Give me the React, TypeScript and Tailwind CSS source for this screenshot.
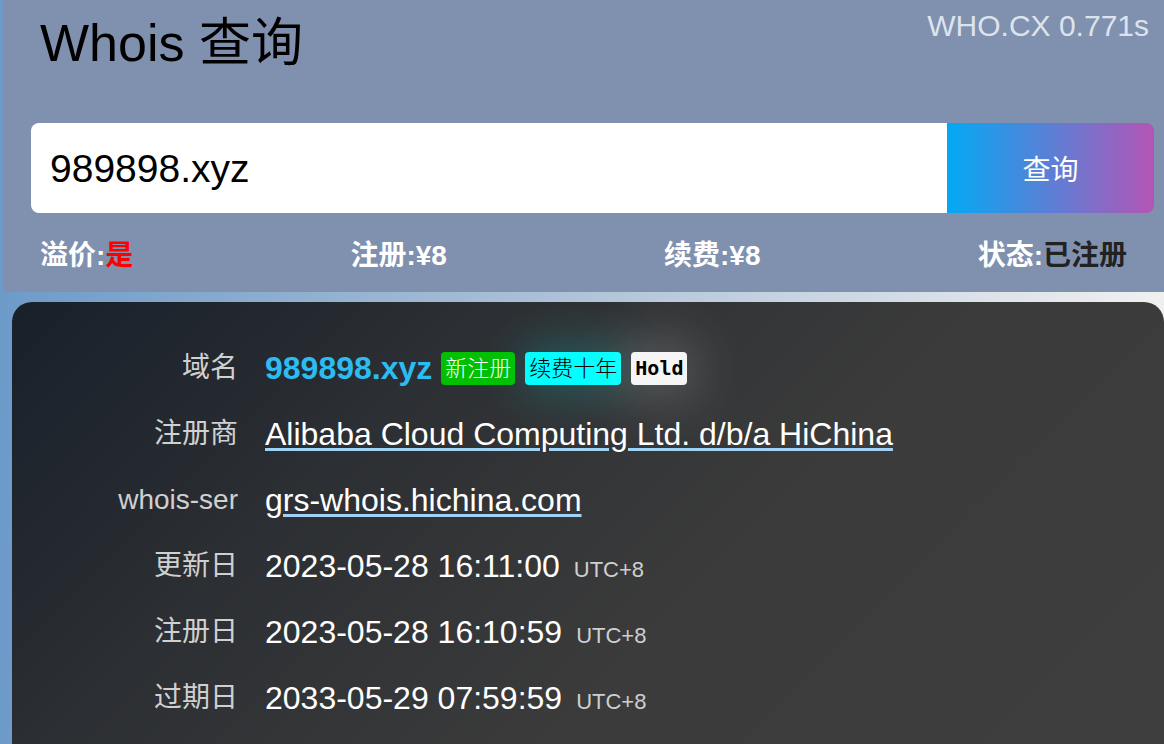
import React from "react";

const rows = [
  { label: "注册商", value: "Alibaba Cloud Computing Ltd. d/b/a HiChina", link: true },
  { label: "whois-ser", value: "grs-whois.hichina.com", link: true },
  { label: "更新日", value: "2023-05-28 16:11:00", tz: "UTC+8" },
  { label: "注册日", value: "2023-05-28 16:10:59", tz: "UTC+8" },
  { label: "过期日", value: "2033-05-29 07:59:59", tz: "UTC+8" },
];

const font = { fontFamily: '"Liberation Sans", "Noto Sans CJK SC", sans-serif' };

const App = () => {
  return (
    <div
      className="min-h-screen w-full overflow-hidden bg-[linear-gradient(90deg,#6d9bc9_0%,#a9bfd6_45%,#f0f0f0_100%)]"
      style={font}
    >
      {/* HEADER */}
      <div className="ml-[3px] h-[292px] bg-[#8090af] flex flex-col">
        <div className="flex justify-between items-start">
          <h1 className="pl-[37px] pt-[11px] text-[52px] leading-[64px] text-black font-normal">
            Whois 查询
          </h1>
          <span className="pt-[8px] pr-[15px] text-[30px] leading-[36px] text-[#dde3ec]">
            WHO.CX 0.771s
          </span>
        </div>

        {/* SEARCH */}
        <div className="mt-[48px] ml-[28px] mr-[10px] h-[90px] flex">
          <div className="flex-1 bg-white rounded-l-[8px] flex items-center pl-[19px] pt-[2px] text-[39px] text-black">
            989898.xyz
          </div>
          <button className="w-[207px] rounded-r-[8px] bg-[linear-gradient(90deg,#03a9f4,#b455b6)] text-white text-[28px] pt-[6px]">
            查询
          </button>
        </div>

        {/* STATS */}
        <div className="flex-1 flex items-center justify-between pl-[37px] pr-[37px] pt-[7px] text-[28px] font-bold text-white">
          <span>
            溢价:<span className="text-[#ff0000]">是</span>
          </span>
          <span>注册:¥8</span>
          <span>续费:¥8</span>
          <span>
            状态:<span className="text-[#222222]">已注册</span>
          </span>
        </div>
      </div>

      {/* RESULT CARD */}
      <div className="mt-[10px] ml-[12px] min-h-[460px] rounded-t-[20px] bg-[linear-gradient(135deg,#18202a_0%,#2c2f33_30%,#3b3b3b_60%,#3e3e3e_100%)] pt-[33px] pl-[106px]">
        <div className="h-[66px] flex items-center gap-[27px]">
          <span className="w-[120px] text-right text-[28px] text-[#d0d0d0] whitespace-nowrap">
            域名
          </span>
          <div className="flex items-center">
            <span className="text-[32px] font-bold text-[#2cbcf2]">989898.xyz</span>
            <span className="ml-[9px] h-[33px] px-[4px] rounded-[4px] bg-[#00c000] text-white text-[22px] leading-[33px] font-light">
              新注册
            </span>
            <span className="ml-[10px] h-[33px] px-[4px] rounded-[4px] bg-[#00ffff] text-black text-[22px] leading-[33px] font-light shadow-[0_0_50px_rgba(0,255,255,0.3)]">
              续费十年
            </span>
            <span
              className="ml-[10px] h-[33px] px-[4px] rounded-[4px] bg-[#f5f5f5] text-black text-[20px] leading-[33px] font-bold shadow-[0_0_60px_rgba(255,255,255,0.45)]"
              style={{ fontFamily: '"DejaVu Sans Mono", "Liberation Mono", monospace' }}
            >
              Hold
            </span>
          </div>
        </div>

        {rows.map((r) => (
          <div key={r.label} className="h-[66px] flex items-center gap-[27px]">
            <span className="w-[120px] text-right text-[28px] text-[#d0d0d0] whitespace-nowrap">
              {r.label}
            </span>
            {r.link ? (
              <span className="text-[32px] text-white underline decoration-[#9fd2f5] decoration-[3px] underline-offset-[3px]">
                {r.value}
              </span>
            ) : (
              <span className="flex items-baseline text-white">
                <span className="text-[32px]">{r.value}</span>
                <span className="ml-[14px] text-[22px] text-[#cfcfcf]">{r.tz}</span>
              </span>
            )}
          </div>
        ))}
      </div>
    </div>
  );
};

export default App;
